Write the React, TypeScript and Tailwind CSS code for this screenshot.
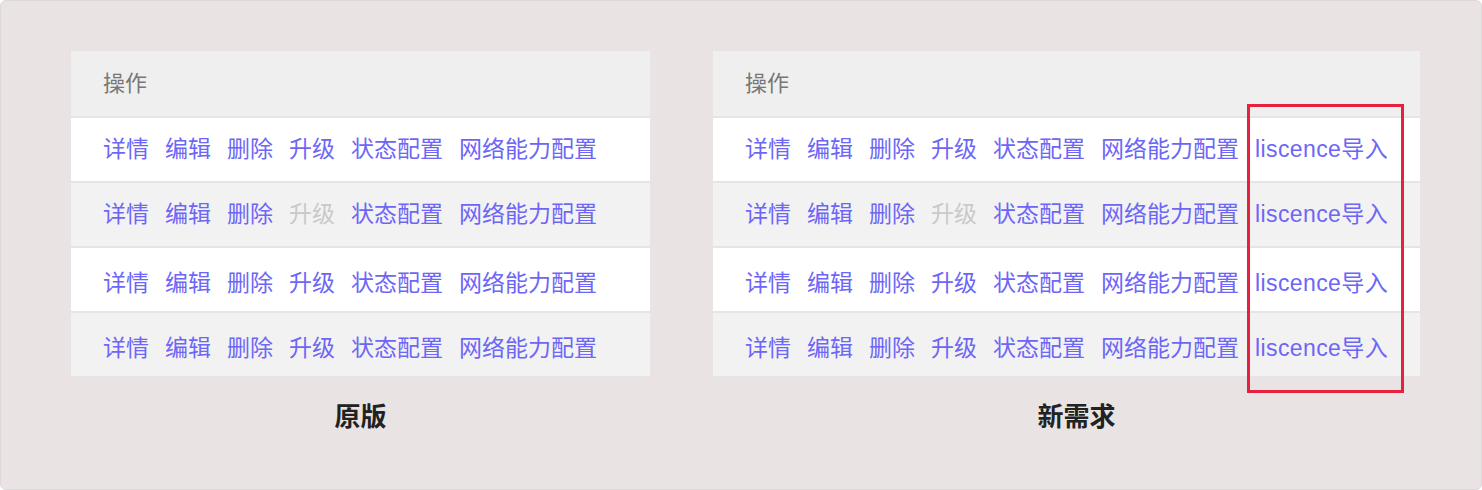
import React from "react";

type Action = { label: string; disabled?: boolean };

const baseActions = (upgradeDisabled: boolean): Action[] => [
  { label: "详情" },
  { label: "编辑" },
  { label: "删除" },
  { label: "升级", disabled: upgradeDisabled },
  { label: "状态配置" },
  { label: "网络能力配置" },
];

const rows = [false, true, false, false];

const font = { fontFamily: '"Liberation Sans", "Noto Sans CJK SC", sans-serif' };

const ActionTable: React.FC<{ width: string; extra?: boolean }> = ({ width, extra }) => (
  <div className={`relative ${width}`}>
    <div className="flex h-[65px] items-center bg-[#efefef] pl-[32px] text-[22px] text-[#777]">
      操作
    </div>
    {rows.map((upgradeDisabled, i) => {
      const actions = baseActions(upgradeDisabled);
      if (extra) actions.push({ label: "liscence导入" });
      return (
        <div
          key={i}
          className={`flex h-[65px] items-center gap-[16px] border-t-2 border-[#e6e5e6] pl-[32px] text-[23px] ${
            i % 2 === 0 ? "bg-white" : "bg-[#f3f2f3]"
          } ${i >= 2 ? "pt-[7px]" : ""}`}
        >
          {actions.map((a) => (
            <span
              key={a.label}
              className={`${a.disabled ? "text-[#c9c9c9]" : "text-[#6d66f6]"} ${
                a.label.startsWith("liscence") ? "tracking-[0.4px]" : ""
              }`}
            >
              {a.label}
            </span>
          ))}
        </div>
      );
    })}
    {extra && (
      <div className="absolute left-[534px] top-[53px] h-[289px] w-[157px] border-[3px] border-[#e8203f]" />
    )}
  </div>
);

export default function App() {
  return (
    <div
      className="h-[490px] w-[1482px] rounded-[6px] border border-[#ddd8d9] bg-[#e9e3e4]"
      style={font}
    >
      <div className="flex gap-[63px] pl-[70px] pt-[50px]">
        <div className="flex flex-col">
          <ActionTable width="w-[579px]" />
          <div className="mt-[28px] text-center text-[26px] font-bold leading-none text-[#222]">
            原版
          </div>
        </div>
        <div className="flex flex-col">
          <ActionTable width="w-[707px]" extra />
          <div className="mt-[28px] pl-[20px] text-center text-[26px] font-bold leading-none text-[#222]">
            新需求
          </div>
        </div>
      </div>
    </div>
  );
}
